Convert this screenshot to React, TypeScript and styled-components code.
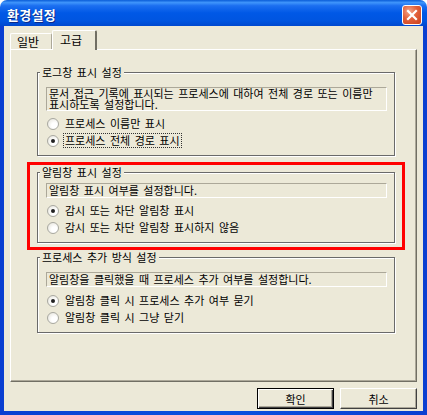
import styled, { createGlobalStyle } from "styled-components";

const face = "#ECE9D8";
const font = `"Noto Sans CJK KR", "Noto Sans", sans-serif`;

const GlobalStyle = createGlobalStyle`
  html, body {
    margin: 0;
    padding: 0;
    background: #ffffff;
  }
  body {
    font-family: ${font};
    font-size: 11px;
    word-spacing: 2px;
    color: #000;
  }
`;

const Window = styled.div`
  width: 427px;
  height: 415px;
  display: flex;
  flex-direction: column;
  overflow: hidden;
`;

const TitleBar = styled.div`
  height: 26px;
  flex: none;
  display: flex;
  align-items: center;
  justify-content: space-between;
  padding: 3px 5px 0 7px;
  box-sizing: border-box;
  border-radius: 7px 7px 0 0;
  background: linear-gradient(
    to bottom,
    #0a5dd8 0%,
    #3f95fb 10%,
    #1c6ff0 22%,
    #0058e6 50%,
    #0055e0 80%,
    #0049cf 100%
  );
`;

const Title = styled.span`
  color: #fff;
  font-family: ${font};
  font-weight: 700;
  font-size: 13px;
  letter-spacing: 0.3px;
  text-shadow: 1px 1px 0 #0a2a8a;
`;

const CloseButton = styled.div`
  width: 20px;
  height: 20px;
  box-sizing: border-box;
  border: 1px solid #fff;
  border-radius: 3px;
  display: flex;
  align-items: center;
  justify-content: center;
  background: radial-gradient(circle at 35% 30%, #f4a58a 0%, #e2603a 45%, #c9401c 100%);
`;

const Frame = styled.div`
  flex: 1;
  display: flex;
  padding: 0 4px 4px;
  background: linear-gradient(to right, #0a3fd1, #0852e0 50%, #0a3fd1);
`;

const Client = styled.div`
  flex: 1;
  display: flex;
  flex-direction: column;
  padding: 4px 6px 0;
  background: ${face};
`;

const TabStrip = styled.div`
  display: flex;
  align-items: flex-end;
  height: 19px;
  flex: none;
`;

const Tab = styled.div<{ $active?: boolean }>`
  box-sizing: border-box;
  width: ${({ $active }) => ($active ? 45 : 42)}px;
  height: ${({ $active }) => ($active ? 20 : 16)}px;
  margin-bottom: ${({ $active }) => ($active ? -1 : 0)}px;
  position: relative;
  z-index: ${({ $active }) => ($active ? 1 : 0)};
  background: ${face};
  border-top: 1px solid #fff;
  border-left: 1px solid #fff;
  border-right: ${({ $active }) => ($active ? "2px solid #716f64" : "1px solid #aca899")};
  border-radius: 2px 2px 0 0;
  padding: ${({ $active }) => ($active ? "2px 0 0 7px" : "1px 0 0 6px")};
  font-size: 12px;
  line-height: 13px;
`;

const TabPanel = styled.div`
  height: 333px;
  flex: none;
  box-sizing: border-box;
  border-top: 1px solid #fff;
  border-left: 1px solid #fff;
  border-right: 1px solid #716f64;
  border-bottom: 1px solid #716f64;
  box-shadow: inset -1px -1px 0 #aca899;
  padding: 16px 21px 0 26px;
  display: flex;
  flex-direction: column;
`;

const Group = styled.fieldset<{ $top: number; $gap: number }>`
  margin: 0;
  min-width: 0;
  padding: ${({ $top }) => $top}px 7px 6px 8px;
  border: 1px solid #6a6a6a;
  box-shadow: 1px 1px 0 #fff, inset 1px 1px 0 #fff;
  display: flex;
  flex-direction: column;
  & > label:first-of-type {
    margin-top: ${({ $gap }) => $gap}px;
  }
`;

const Caption = styled.legend`
  margin-left: -6px;
  padding: 0 2px;
  font-size: 11px;
  line-height: 12px;
  background: ${face};
`;

const Description = styled.div<{ $multi?: boolean }>`
  border-top: 1px solid #aca899;
  border-left: 1px solid #aca899;
  border-right: 1px solid #fff;
  border-bottom: 1px solid #fff;
  padding: ${({ $multi }) => ($multi ? "0 2px" : "1px 2px")};
  font-size: 11px;
  line-height: 11px;
  white-space: pre-line;
`;

const Option = styled.label`
  display: flex;
  align-items: center;
  height: 17px;
  padding-left: 1px;
  gap: 4px;
  font-size: 11px;
`;

const Radio = styled.span<{ $checked?: boolean }>`
  width: 12px;
  height: 12px;
  box-sizing: border-box;
  border-radius: 50%;
  border: 1px solid #a8a8a0;
  background: radial-gradient(circle at 65% 65%, #ffffff 30%, #e2e0d6 100%);
  display: flex;
  align-items: center;
  justify-content: center;
  &::after {
    content: "";
    width: 4px;
    height: 4px;
    border-radius: 50%;
    background: ${({ $checked }) => ($checked ? "#222" : "transparent")};
  }
`;

const OptionText = styled.span<{ $focused?: boolean }>`
  line-height: 13px;
  padding: 0 1px;
  border: 1px dotted ${({ $focused }) => ($focused ? "#333" : "transparent")};
`;

const Highlight = styled.div`
  margin: 6px -10px 0;
  border: 3px solid #ff0000;
  padding: 1px 7px 4px;
`;

const Spaced = styled.div`
  margin-top: 1px;
  display: flex;
  flex-direction: column;
`;

const Footer = styled.div`
  display: flex;
  justify-content: flex-end;
  gap: 6px;
  padding-top: 6px;
`;

const Button = styled.div<{ $default?: boolean }>`
  width: 77px;
  height: 21px;
  box-sizing: border-box;
  display: flex;
  align-items: center;
  justify-content: center;
  font-size: 11px;
  background: ${face};
  border: 1px solid;
  border-color: ${({ $default }) => ($default ? "#000" : "#fff #404040 #404040 #fff")};
  box-shadow: ${({ $default }) =>
    $default
      ? "inset 1px 1px 0 #fff, inset -1px -1px 0 #404040, inset -2px -2px 0 #aca899"
      : "inset -1px -1px 0 #aca899"};
`;

type Choice = { text: string; checked?: boolean; focused?: boolean };

type SettingProps = {
  title: string;
  description: string;
  multi?: boolean;
  top: number;
  gap: number;
  choices: Choice[];
};

const Setting = ({ title, description, multi, top, gap, choices }: SettingProps) => (
  <Group $top={top} $gap={gap}>
    <Caption>{title}</Caption>
    <Description $multi={multi}>{description}</Description>
    {choices.map((c) => (
      <Option key={c.text}>
        <Radio $checked={c.checked} />
        <OptionText $focused={c.focused}>{c.text}</OptionText>
      </Option>
    ))}
  </Group>
);

export default function App() {
  return (
    <>
      <GlobalStyle />
      <Window>
        <TitleBar>
          <Title>환경설정</Title>
          <CloseButton>
            <svg width="12" height="12" viewBox="0 0 12 12">
              <path d="M2 2 L10 10 M10 2 L2 10" stroke="#fff" strokeWidth="2.2" strokeLinecap="square" />
            </svg>
          </CloseButton>
        </TitleBar>
        <Frame>
          <Client>
            <TabStrip>
              <Tab>일반</Tab>
              <Tab $active>고급</Tab>
            </TabStrip>
            <TabPanel>
              <Setting
                title="로그창 표시 설정"
                description={"문서 접근 기록에 표시되는 프로세스에 대하여 전체 경로 또는 이름만\n표시하도록 설정합니다."}
                multi
                top={9}
                gap={4}
                choices={[
                  { text: "프로세스 이름만 표시" },
                  { text: "프로세스 전체 경로 표시", checked: true, focused: true },
                ]}
              />
              <Highlight>
                <Setting
                  title="알림창 표시 설정"
                  description="알림창 표시 여부를 설정합니다."
                  top={5}
                  gap={4}
                  choices={[
                    { text: "감시 또는 차단 알림창 표시", checked: true },
                    { text: "감시 또는 차단 알림창 표시하지 않음" },
                  ]}
                />
              </Highlight>
              <Spaced>
                <Setting
                  title="프로세스 추가 방식 설정"
                  description="알림창을 클릭했을 때 프로세스 추가 여부를 설정합니다."
                  top={9}
                  gap={5}
                  choices={[
                    { text: "알림창 클릭 시 프로세스 추가 여부 묻기", checked: true },
                    { text: "알림창 클릭 시 그냥 닫기" },
                  ]}
                />
              </Spaced>
            </TabPanel>
            <Footer>
              <Button $default>확인</Button>
              <Button>취소</Button>
            </Footer>
          </Client>
        </Frame>
      </Window>
    </>
  );
}
